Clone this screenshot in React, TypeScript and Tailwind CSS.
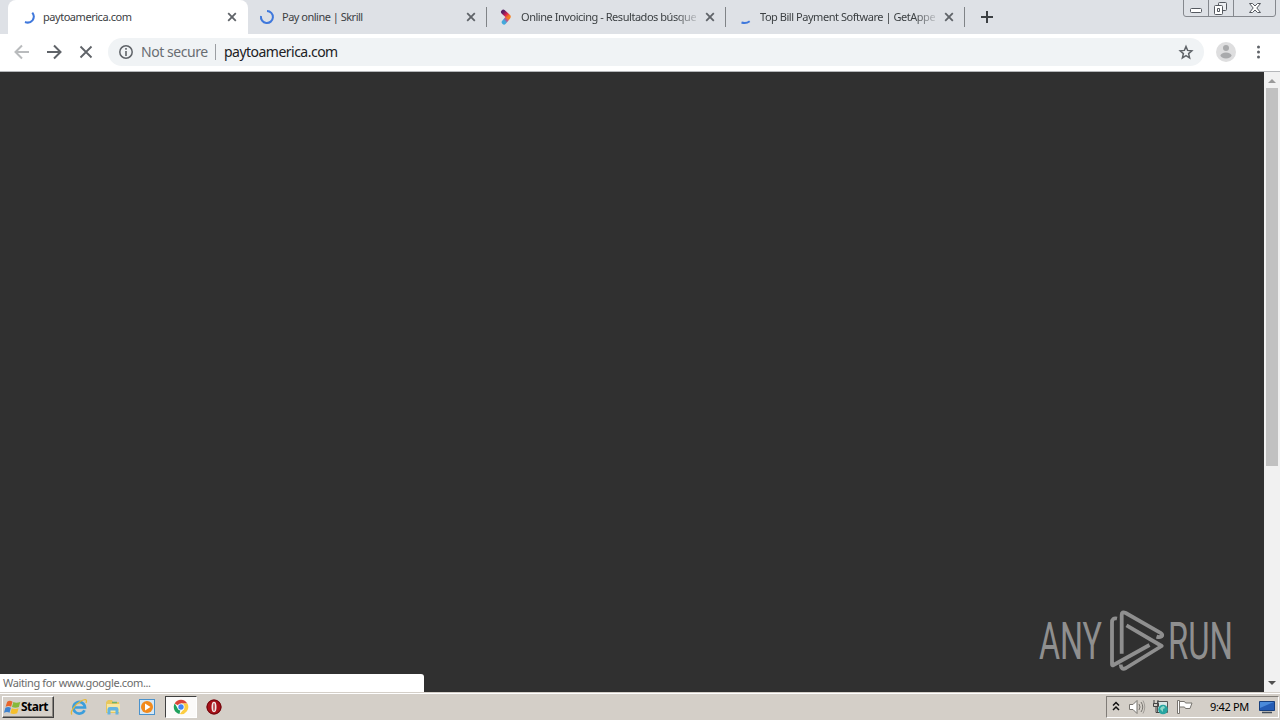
import React from "react";

const Spinner = ({ d }: { d: string }) => (
  <svg width="16" height="16" viewBox="0 0 16 16" fill="none" className="shrink-0">
    <path d={d} stroke="#3f78dc" strokeWidth="2" />
  </svg>
);

const BrandMark = () => (
  <svg width="16" height="16" viewBox="0 0 16 16" className="shrink-0">
    <defs>
      <linearGradient id="brandTop" x1="0" y1="0" x2="1" y2="1">
        <stop offset="0" stopColor="#5b1f63" />
        <stop offset="0.55" stopColor="#d81f52" />
        <stop offset="1" stopColor="#f47b20" />
      </linearGradient>
      <linearGradient id="brandBottom" x1="1" y1="0" x2="0" y2="1">
        <stop offset="0" stopColor="#f68b1f" />
        <stop offset="0.45" stopColor="#c2528c" />
        <stop offset="0.8" stopColor="#43a9dc" />
      </linearGradient>
    </defs>
    <path d="M6 13.300 10 8.500" stroke="url(#brandBottom)" strokeWidth="4.600" strokeLinecap="round" />
    <path d="M5.300 3 10.300 7.500" stroke="url(#brandTop)" strokeWidth="4.600" strokeLinecap="round" />
  </svg>
);

const tabs = [
  {
    title: "paytoamerica.com",
    icon: <Spinner d="M12.300 3.600Q15.300 7.500 12.500 11.300 9.500 14.800 5 13" />,
    spacing: "tracking-[-0.46px]",
    active: true,
  },
  {
    title: "Pay online | Skrill",
    icon: <Spinner d="M8 2A6 6 0 1 1 2 7" />,
    spacing: "tracking-[-0.5px]",
  },
  {
    title: "Online Invoicing - Resultados búsque",
    icon: <BrandMark />,
    spacing: "tracking-[-0.46px]",
    fade: true,
  },
  {
    title: "Top Bill Payment Software | GetAppe",
    icon: <Spinner d="M4.500 13.500Q9 15 12.700 12.300" />,
    spacing: "tracking-[-0.46px]",
    fade: true,
  },
];

const TabClose = () => (
  <svg width="10" height="10" viewBox="0 0 10 10" className="shrink-0">
    <path d="m1.200 1.200 7.600 7.600m0-7.600L1.200 8.800" stroke="#5f6368" strokeWidth="1.800" />
  </svg>
);

const WindowButtons = () => (
  <svg width="94" height="17" viewBox="0 0 94 17" fill="none" className="ml-auto mr-[3px] self-start">
    <path d="M.5 0v14q0 2.500 2.500 2.500h87q2.500 0 2.500-2.500V0M25.500 0v16M50.500 0v16" stroke="#85888e" />
    <rect x="7.500" y="8.500" width="11" height="4" rx="1" fill="#fff" stroke="#555960" />
    <rect x="35.500" y="2.500" width="8" height="8" rx="1" fill="#eceef1" stroke="#555960" />
    <rect x="31.500" y="5.500" width="8" height="9" rx="1" fill="#fff" stroke="#555960" />
    <path d="M34.500 8.500h2v3h-2z" stroke="#555960" />
    <path d="M66.500 3.500h3l2.500 2.500 2.500-2.500h3L73.800 8l3.700 4.500h-3L72 10l-2.500 2.500h-3L70.200 8z" fill="#fff" stroke="#555960" />
  </svg>
);

const TabStrip = () => (
  <header className="flex h-[34px] bg-[#dee1e6] pl-2">
    {tabs.map((tab) => (
      <div
        key={tab.title}
        className={
          tab.active
            ? "flex h-full w-60 items-center rounded-t-lg bg-white pl-3"
            : "flex h-full w-[239px] items-center pl-[11px]"
        }
      >
        {tab.icon}
        <span className="ml-[7px] w-[178px] whitespace-nowrap text-[11px] leading-[18px] text-[#3c4043]">
          <span
            className={`${tab.spacing} ${
              tab.fade ? "[mask-image:linear-gradient(to_right,#000_88%,rgba(0,0,0,0.2))]" : ""
            }`}
          >
            {tab.title}
          </span>
        </span>
        <span className="ml-1.5 flex">
          <TabClose />
        </span>
        {!tab.active && <span className="ml-auto h-5 w-px bg-[#808387]" />}
      </div>
    ))}
    <svg width="12" height="12" viewBox="0 0 12 12" className="ml-4 mt-[11px]">
      <path d="M6 0v12M0 6h12" stroke="#3c4043" strokeWidth="2" />
    </svg>
    <WindowButtons />
  </header>
);

const Toolbar = () => (
  <div className="flex h-[38px] items-center border-b border-[#b5b7ba] bg-white pb-px pl-[14px]">
    <svg width="80" height="16" viewBox="0 0 80 16" fill="none" strokeWidth="2">
      <path d="M15 8H2M8 1.500 1.500 8 8 14.500" stroke="#b9bbbd" />
      <path d="M33 8h13M40 1.500 46.500 8 40 14.500" stroke="#5f6368" />
      <path d="m66.500 2.500 11 11m0-11-11 11" stroke="#5f6368" strokeWidth="1.800" />
    </svg>
    <div className="ml-[14px] flex h-7 w-[1096px] items-center rounded-full bg-[#f0f3f5] pl-[11px] text-[14px]">
      <svg width="14" height="14" viewBox="0 0 14 14" fill="none">
        <circle cx="7" cy="7" r="6.200" stroke="#5f6368" strokeWidth="1.500" />
        <path d="M7 3v1.700M7 6v5" stroke="#5f6368" strokeWidth="1.600" />
      </svg>
      <span className="mb-0.5 ml-2 w-[74px] whitespace-nowrap tracking-[-0.45px] text-[#696d72]">Not secure</span>
      <span className="h-4 w-px bg-[#9b9ea2]" />
      <span className="mb-0.5 ml-2 whitespace-nowrap tracking-[-0.52px] text-[#202124]">paytoamerica.com</span>
      <svg width="16" height="16" viewBox="0 0 16 16" fill="none" className="ml-auto mr-[10px]">
        <path
          d="m8 2.500 1.600 3.900 4.200.4-3.200 2.800 1 4.200L8 11.600l-3.600 2.200 1-4.200-3.200-2.800 4.200-.4z"
          stroke="#5f6368"
          strokeWidth="1.500"
        />
      </svg>
    </div>
    <svg width="20" height="20" viewBox="0 0 20 20" className="ml-3">
      <circle cx="10" cy="10" r="10" fill="#dededf" />
      <circle cx="10" cy="6" r="3" fill="#a9aaac" />
      <ellipse cx="10" cy="13.500" rx="5.500" ry="2.900" fill="#a9aaac" />
    </svg>
    <svg width="4" height="14" viewBox="0 0 4 14" fill="#5f6368" className="ml-5">
      <circle cx="2.500" cy="2" r="1.500" />
      <circle cx="2.500" cy="7" r="1.500" />
      <circle cx="2.500" cy="12" r="1.500" />
    </svg>
  </div>
);

const Watermark = () => (
  <svg width="200" height="72" viewBox="0 0 200 72" className="absolute bottom-4 right-11 overflow-visible">
    <g fill="#8f8f8f" fontFamily="Roboto, sans-serif" fontSize="52" fontWeight="400">
      <text x="3" y="55" textLength="63" lengthAdjust="spacingAndGlyphs">
        ANY
      </text>
      <text x="132" y="55" textLength="65" lengthAdjust="spacingAndGlyphs">
        RUN
      </text>
    </g>
    <g fill="none" stroke="#8f8f8f" strokeWidth="3.800" strokeLinejoin="round">
      <path d="M81 14.500q-5-1-5 4v41.800q0 1.500 1.500.7L113.500 41" />
      <path d="M85.700 49.700V11q0-4 4-2l34.800 19.800q3 2 1 3.600-2 1.200-5 .2" />
      <path d="M90.500 21.300 125.700 42 90 64q-5 2.500-5.300-3.500" />
    </g>
  </svg>
);

const Scrollbar = () => (
  <div className="flex w-4 flex-col items-center bg-[#f1f1f1]">
    <svg width="8" height="16" viewBox="0 0 8 16">
      <path d="M0 11h8L4 7z" fill="#9a9a9a" />
    </svg>
    <div className="h-[378px] w-3 bg-[#c1c1c1]" />
    <svg width="8" height="17" viewBox="0 0 8 17" className="mt-auto">
      <path d="M0 6h8l-4 4z" fill="#505050" />
    </svg>
  </div>
);

const WindowsFlag = () => (
  <svg width="17" height="17" viewBox="0 0 16 16">
    <path d="M3 2.500Q5.500 1 8 2.500L6.700 7.300Q4.500 6 1.500 7.300z" fill="#e8652a" />
    <path d="M8.800 2.800Q11.500 4.300 15.300 2.800L14 7.500Q11 9 7.500 7.600z" fill="#86b93a" />
    <path d="M1.300 8.200Q4 7 6.500 8.200L5.200 13Q3 11.700 0 13z" fill="#3f83cf" />
    <path d="M7.300 8.600Q10.500 10 13.700 8.600L12.400 13.300Q9 14.700 6 13.300z" fill="#f5bf2c" />
  </svg>
);

const ExplorerIcon = () => (
  <svg width="18" height="18" viewBox="0 0 18 18" fill="none">
    <path d="M14.500 12.200A5.800 5.800 0 1 1 15 9.500H5" stroke="#3b9edc" strokeWidth="2.700" />
    <path d="M2 16.500C-.5 14 5 6.500 11 3c4-2.300 6.500-2 5 2" stroke="#e5b93a" strokeWidth="1.300" />
  </svg>
);

const FolderIcon = () => (
  <svg width="18" height="18" viewBox="0 0 18 18">
    <path d="M2 4 4 2h4l1 2h6v11H2z" fill="#e8c75e" />
    <path d="M3 6h13v8H3z" fill="#f7e6a0" />
    <path d="M8 4.500h5" stroke="#6fb36a" strokeWidth="1.500" />
    <path d="M3.500 16.500v-5.200q0-2.300 2.500-2.300h6q2.500 0 2.500 2.300v5.200h-3V12.500H6.500v4z" fill="#63b4e0" />
  </svg>
);

const MediaIcon = () => (
  <svg width="18" height="18" viewBox="0 0 18 18">
    <rect x="1.500" y="1.500" width="15" height="15" fill="#d5e8f6" stroke="#4a92cc" />
    <circle cx="9" cy="9" r="6" fill="#f28a1c" />
    <path d="M7 5.500 12.500 9 7 12.500z" fill="#fff" />
  </svg>
);

const ChromeIcon = () => (
  <svg width="16" height="16" viewBox="0 0 16 16">
    <path d="M8 8 1.700 4.400A7.200 7.200 0 0 1 14.300 4.500L8 4.600z" fill="#db4437" />
    <path d="M8 8 6.500 15A7.200 7.200 0 0 1 1.700 4.400L5 9.800z" fill="#1fa15d" />
    <path d="M8 4.600h6.400A7.200 7.200 0 0 1 6.800 15.100L11 9.700z" fill="#fccd41" />
    <circle cx="8" cy="8" r="3.500" fill="#fff" />
    <circle cx="8" cy="8" r="2.700" fill="#4285f4" />
  </svg>
);

const OperaIcon = () => (
  <svg width="16" height="16" viewBox="0 0 16 16">
    <circle cx="8" cy="8" r="7.500" fill="#a81018" />
    <circle cx="8" cy="8" r="7" fill="none" stroke="#68090e" />
    <ellipse cx="8" cy="8" rx="2.500" ry="5.200" fill="#f1e9e7" />
    <ellipse cx="8" cy="8" rx="0.800" ry="4" fill="#b5343a" />
  </svg>
);

const Tray = () => (
  <div className="ml-auto flex h-[22px] w-[173px] items-center border border-b-white border-l-[#807c77] border-r-white border-t-[#807c77] pl-[5px]">
    <svg width="8" height="10" viewBox="0 0 8 10" fill="none" stroke="#111" strokeWidth="1.500" className="mb-0.5">
      <path d="M1 4.500 4 1.500 7 4.500M1 9 4 6l3 3" />
    </svg>
    <svg width="18" height="16" viewBox="0 0 18 16" fill="none" className="ml-2">
      <path d="M1.500 5.500H5l4-4v13l-4-4H1.500z" fill="#fff" stroke="#77746f" />
      <path d="M11 5q2 3 0 6M13 3q3.500 5 0 10" stroke="#77746f" />
      <path d="M15 1.500q3.500 6.500 0 13" stroke="#a19d98" />
    </svg>
    <svg width="18" height="16" viewBox="0 0 18 16" fill="none" className="ml-1.5">
      <path d="M5.500 2.500h10v11h-10z" fill="#d9e7e7" stroke="#555" />
      <path d="M2 1v4m4-4v4M1.500 4.500h5v3h-5zM4 8v5.500h4" stroke="#444" />
      <circle cx="11" cy="10.500" r="4.800" fill="#27a5a1" />
      <path d="M8 10q1-3 4-3l1 2-2 1v3z" fill="#8bd6c7" />
    </svg>
    <svg width="18" height="16" viewBox="0 0 18 16" className="ml-1.5">
      <path d="M3.500 2.500h5l1 1.500h6.500l-2 5.500H9.500l-1-1.500h-5z" fill="#fff" stroke="#77746f" />
      <path d="M1.500 1.500h2v13h-2z" fill="#fff" stroke="#77746f" />
    </svg>
    <span className="ml-4 mt-0.5 w-[42px] whitespace-nowrap text-[11px] tracking-[-0.35px] text-black">9:42 PM</span>
    <svg width="16" height="14" viewBox="0 0 16 14" className="ml-[7px]">
      <path d="M.5 1.500h15v9H.500z" fill="#245cb5" stroke="#173f7d" />
      <path d="M1 2h14L1 8z" fill="#4a8ada" />
      <path d="M3 12.500h10" stroke="#434d59" strokeWidth="1.500" />
    </svg>
  </div>
);

const Taskbar = () => (
  <footer className="flex h-7 items-center border-t border-[#d4cfc8] bg-[#d4cfc8] pl-0.5 pr-px shadow-[inset_0_1px_0_#fff]">
    <button className="mt-px flex h-[22px] w-[52px] items-center border border-b-[#404040] border-l-white border-r-[#404040] border-t-white pl-px text-[12px] font-bold tracking-[-0.5px] text-black shadow-[inset_-1px_-1px_0_#8b8781]">
      <WindowsFlag />
      <span>Start</span>
    </button>
    <div className="ml-4 mt-px flex items-center">
      <ExplorerIcon />
      <span className="ml-4 flex">
        <FolderIcon />
      </span>
      <span className="ml-4 flex">
        <MediaIcon />
      </span>
      <span className="ml-[9px] flex h-[22px] w-8 items-center justify-center border border-b-white border-l-[#404040] border-r-white border-t-[#404040] bg-[#fbfaf9]">
        <ChromeIcon />
      </span>
      <span className="ml-[9px] flex">
        <OperaIcon />
      </span>
    </div>
    <Tray />
  </footer>
);

const App: React.FC = () => {
  return (
    <div className="flex h-[720px] w-[1280px] flex-col overflow-hidden font-['Noto_Sans','Open_Sans',sans-serif]">
      <TabStrip />
      <Toolbar />
      <main className="relative flex h-[620px] bg-[#303030]">
        <div className="flex-1" />
        <Watermark />
        <div className="absolute bottom-0 left-0 h-[18px] w-[424px] rounded-tr-[3px] bg-white pl-[3px] text-[11px] leading-[18px] tracking-[-0.37px] text-[#6b6b6b]">
          Waiting for www.google.com...
        </div>
        <Scrollbar />
      </main>
      <Taskbar />
    </div>
  );
};

export default App;
